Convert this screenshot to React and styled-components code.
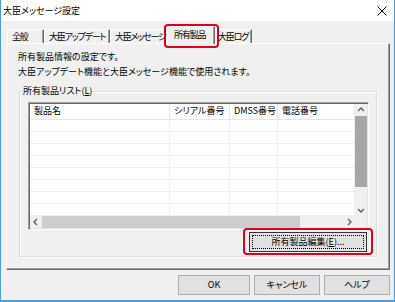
import React from 'react';
import styled, { createGlobalStyle, css } from 'styled-components';

const FONT = `"Noto Sans CJK JP", "Noto Sans", sans-serif`;

const GlobalStyle = createGlobalStyle`
  html, body { margin: 0; padding: 0; background: #ffffff; }
  * { box-sizing: border-box; }
`;

const COLS = '140px 60px 48px 1fr';

const Window = styled.div`
  width: 395px;
  height: 302px;
  display: flex;
  flex-direction: column;
  border-left: 1px solid #4a9ee0;
  border-right: 1px solid #4a9ee0;
  border-bottom: 2px solid #4a9ee0;
  background: #f0f0f0;
  font-family: ${FONT};
  font-size: 9px;
  font-feature-settings: "palt";
  color: #000;
  overflow: hidden;
`;

const TitleBar = styled.div`
  flex: none;
  height: 21px;
  background: #ffffff;
  display: flex;
  align-items: center;
  justify-content: space-between;
  padding: 0 7px 0 2px;
`;

const Title = styled.span`
  font-size: 9px;
  line-height: 12px;
`;

const Body = styled.div`
  flex: 1;
  display: flex;
  flex-direction: column;
  padding: 5px 4px 5px 5px;
  min-height: 0;
`;

const TabStrip = styled.div`
  flex: none;
  height: 17px;
  display: flex;
  align-items: flex-end;
  padding-left: 1px;
  position: relative;
  z-index: 1;
`;

const Tab = styled.div`
  flex: none;
  width: ${p => p.$w}px;
  height: 14px;
  display: flex;
  align-items: center;
  padding-left: 4px;
  white-space: nowrap;
  letter-spacing: -1.2px;
  background: #f0f0f0;
  border-top: 1px solid #ffffff;
  border-left: 1px solid #ffffff;
  border-right: 1px solid #696969;
  box-shadow: inset -1px 0 #a0a0a0;
  line-height: 12px;
  overflow: hidden;
  ${p => p.$active && css`
    width: ${p.$w + 4}px;
    height: 18px;
    margin: 0 -2px -1px -2px;
    padding-left: 6px;
    padding-bottom: 2px;
    position: relative;
    z-index: 2;
    overflow: visible;
  `}
  ${p => p.$highlight && css`
    &::after {
      content: '';
      position: absolute;
      top: -3px;
      right: -5px;
      bottom: -4px;
      left: -4px;
      border: 2px solid #e2001a;
      border-radius: 4px;
      pointer-events: none;
    }
  `}
`;

const Panel = styled.div`
  flex: 1;
  min-height: 0;
  display: flex;
  flex-direction: column;
  background: #f0f0f0;
  border-top: 1px solid #ffffff;
  border-left: 1px solid #ffffff;
  border-right: 1px solid #696969;
  border-bottom: 1px solid #696969;
  box-shadow: inset -1px -1px #a0a0a0;
  padding: 5px 12px 12px 11px;
`;

const Description = styled.p`
  margin: 0;
  line-height: 15px;
`;

const Group = styled.fieldset`
  margin: 6px 0 0 1px;
  padding: 5px 7px 4px 8px;
  border: 1px solid #dcdcdc;
  box-shadow: 1px 1px #ffffff, inset 1px 1px #ffffff;
  display: flex;
  flex-direction: column;
  min-width: 0;
`;

const Legend = styled.legend`
  margin-left: -6px;
  padding: 0 1px;
  line-height: 12px;
  background: #f0f0f0;
`;

const ListView = styled.div`
  height: 128px;
  display: grid;
  grid-template-columns: 1fr 12px;
  grid-template-rows: 1fr 12px;
  border-style: solid;
  border-width: 1px;
  border-color: #a0a0a0 #ffffff #ffffff #a0a0a0;
  padding: 1px;
  box-shadow: inset 1px 1px #696969, inset -1px -1px #e3e3e3;
  background: #ffffff;
`;

const ListArea = styled.div`
  overflow: hidden;
  background: #ffffff;
  display: flex;
  flex-direction: column;
`;

const HeaderRow = styled.div`
  flex: none;
  height: 16px;
  display: grid;
  grid-template-columns: ${COLS};
  border-bottom: 1px solid #e5e5e5;
`;

const HeaderCell = styled.div`
  padding: 0 0 1px 4px;
  display: flex;
  align-items: center;
  white-space: nowrap;
  overflow: hidden;
  border-right: 1px solid #e5e5e5;
  line-height: 12px;
`;

const Row = styled.div`
  flex: none;
  height: 12px;
  display: grid;
  grid-template-columns: ${COLS};
  border-bottom: 1px solid #f0f0f0;
`;

const Cell = styled.div`
  border-right: 1px solid #f0f0f0;
`;

const VScroll = styled.div`
  display: flex;
  flex-direction: column;
  background: #f0f0f0;
`;

const HScroll = styled.div`
  display: flex;
  background: #f0f0f0;
`;

const Corner = styled.div`
  background: #f0f0f0;
`;

const Arrow = styled.div`
  flex: none;
  width: 12px;
  height: 12px;
  display: flex;
  align-items: center;
  justify-content: center;
  color: #606060;
`;

const Thumb = styled.div`
  flex: none;
  background: ${p => p.$dark ? '#a6a6a6' : '#cdcdcd'};
  ${p => p.$vertical ? css`height: ${p.$size}px;` : css`width: ${p.$size}px;`}
`;

const Track = styled.div`
  flex: 1;
`;

const Button = styled.button`
  position: relative;
  font-family: ${FONT};
  font-size: 9px;
  font-feature-settings: "palt";
  color: #000;
  width: ${p => p.$w}px;
  height: 20px;
  padding: 0;
  background: #e1e1e1;
  border: 1px solid ${p => p.$focused ? '#333333' : '#adadad'};
  display: flex;
  align-items: stretch;
  justify-content: center;
  line-height: 12px;
  ${p => p.$highlight && css`
    &::after {
      content: '';
      position: absolute;
      top: -5px;
      right: -7px;
      bottom: -4px;
      left: -7px;
      border: 2px solid #e2001a;
      border-radius: 4px;
      pointer-events: none;
    }
  `}
`;

const EditButton = styled(Button)`
  align-self: flex-end;
  margin: 2px 2px 0 0;
  padding: 2px;
`;

const FocusRing = styled.span`
  flex: 1;
  display: flex;
  align-items: center;
  justify-content: center;
  border: 1px dotted #000;
`;

const Label = styled.span`
  display: flex;
  align-items: center;
  justify-content: center;
  flex: 1;
`;

const ButtonRow = styled.div`
  flex: none;
  display: flex;
  justify-content: flex-end;
  gap: 4px;
  margin-top: 5px;
`;

const Chevron = ({ dir }) => {
  const pts = {
    up: '3,7 6,4 9,7',
    down: '3,5 6,8 9,5',
    left: '7,3 4,6 7,9',
    right: '5,3 8,6 5,9',
  }[dir];
  return (
    <svg width="12" height="12" viewBox="0 0 12 12">
      <polyline points={pts} fill="none" stroke="currentColor" strokeWidth="1.4" />
    </svg>
  );
};

const CloseIcon = () => (
  <svg width="10" height="10" viewBox="0 0 10 10">
    <line x1="0.5" y1="0.5" x2="9.5" y2="9.5" stroke="#000" strokeWidth="1" />
    <line x1="9.5" y1="0.5" x2="0.5" y2="9.5" stroke="#000" strokeWidth="1" />
  </svg>
);

const tabs = [
  { label: '全般', w: 37 },
  { label: '大臣アップデート', w: 66 },
  { label: '大臣メッセージ', w: 59 },
  { label: '所有製品', w: 44, active: true },
  { label: '大臣ログ', w: 39 },
];

const columns = ['製品名', 'シリアル番号', 'DMSS番号', '電話番号'];

export default function App() {
  return (
    <>
      <GlobalStyle />
      <Window>
        <TitleBar>
          <Title>大臣メッセージ設定</Title>
          <CloseIcon />
        </TitleBar>
        <Body>
          <TabStrip>
            {tabs.map(t => (
              <Tab key={t.label} $w={t.w} $active={t.active} $highlight={t.active}>
                {t.label}
              </Tab>
            ))}
          </TabStrip>
          <Panel>
            <Description>
              所有製品情報の設定です。
              <br />
              大臣アップデート機能と大臣メッセージ機能で使用されます。
            </Description>
            <Group>
              <Legend>所有製品リスト(<u>L</u>)</Legend>
              <ListView>
                <ListArea>
                  <HeaderRow>
                    {columns.map(c => (
                      <HeaderCell key={c}>{c}</HeaderCell>
                    ))}
                  </HeaderRow>
                  {Array.from({ length: 8 }).map((_, i) => (
                    <Row key={i}>
                      <Cell />
                      <Cell />
                      <Cell />
                      <Cell />
                    </Row>
                  ))}
                </ListArea>
                <VScroll>
                  <Arrow><Chevron dir="up" /></Arrow>
                  <Thumb $vertical $dark $size={71} />
                  <Track />
                  <Arrow><Chevron dir="down" /></Arrow>
                </VScroll>
                <HScroll>
                  <Arrow><Chevron dir="left" /></Arrow>
                  <Thumb $size={258} />
                  <Track />
                  <Arrow><Chevron dir="right" /></Arrow>
                </HScroll>
                <Corner />
              </ListView>
              <EditButton $w={118} $focused $highlight>
                <FocusRing>所有製品編集(<u>E</u>)...</FocusRing>
              </EditButton>
            </Group>
          </Panel>
          <ButtonRow>
            <Button $w={72}><Label>OK</Label></Button>
            <Button $w={66}><Label>キャンセル</Label></Button>
            <Button $w={66}><Label>ヘルプ</Label></Button>
          </ButtonRow>
        </Body>
      </Window>
    </>
  );
}
